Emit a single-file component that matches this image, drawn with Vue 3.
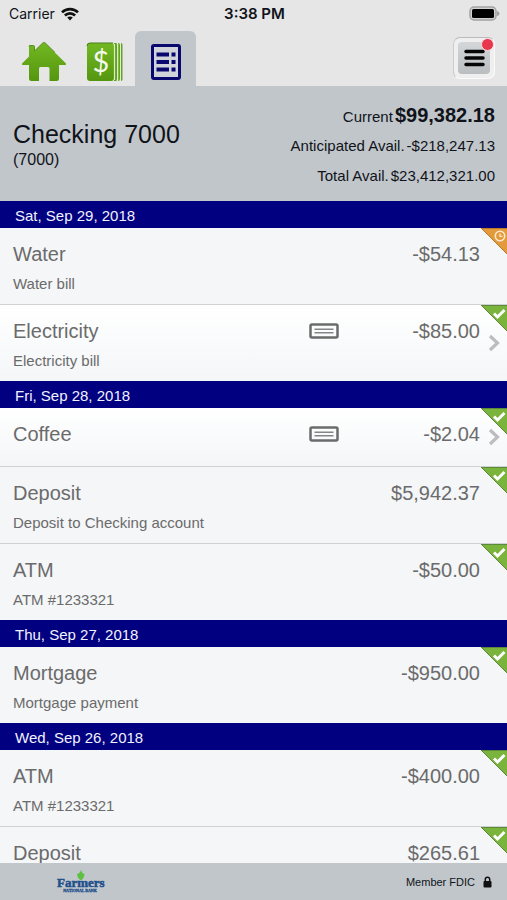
<script setup>
const groups = [
  {
    date: 'Sat, Sep 29, 2018',
    items: [
      { name: 'Water', note: 'Water bill', amount: '-$54.13', status: 'pending' },
      { name: 'Electricity', note: 'Electricity bill', amount: '-$85.00', status: 'cleared', check: true },
    ],
  },
  {
    date: 'Fri, Sep 28, 2018',
    items: [
      { name: 'Coffee', note: '', amount: '-$2.04', status: 'cleared', check: true },
      { name: 'Deposit', note: 'Deposit to Checking account', amount: '$5,942.37', status: 'cleared' },
      { name: 'ATM', note: 'ATM #1233321', amount: '-$50.00', status: 'cleared' },
    ],
  },
  {
    date: 'Thu, Sep 27, 2018',
    items: [{ name: 'Mortgage', note: 'Mortgage payment', amount: '-$950.00', status: 'cleared' }],
  },
  {
    date: 'Wed, Sep 26, 2018',
    items: [
      { name: 'ATM', note: 'ATM #1233321', amount: '-$400.00', status: 'cleared' },
      { name: 'Deposit', note: '', amount: '$265.61', status: 'cleared' },
    ],
  },
]
</script>

<template>
  <div class="app">
    <div class="status">
      <div class="carrier">
        <span>Carrier</span>
        <svg width="18" height="14" viewBox="0 0 18 14" fill="none" stroke="#111" stroke-width="2.6">
          <path d="M1 5.4C5.5 1 12.500 1 17 5.400" />
          <path d="M3.900 8.500C6.800 5.600 11.200 5.600 14.100 8.500" />
          <path d="M9 13.600L6.200 10.600C7.800 9.100 10.200 9.100 11.800 10.600Z" fill="#111" stroke="none" />
        </svg>
      </div>
      <div class="time">3:38 PM</div>
      <div class="battery">
        <svg width="31" height="15" viewBox="0 0 31 15">
          <rect x="1" y="1" width="26" height="13" rx="4" fill="#d2d2d2" stroke="#a3a3a3" stroke-width="1.500" />
          <rect x="3" y="3" width="22" height="9" rx="1.500" fill="#000" />
          <path d="M28 5Q30.500 5.500 30.500 7.500T28 10Z" fill="#a3a3a3" />
        </svg>
      </div>
    </div>

    <nav class="tabs">
      <a class="tab" href="#home" aria-label="Home">
        <svg width="46" height="40" viewBox="0 0 46 40">
          <defs>
            <linearGradient id="leaf" x1="0" y1="0" x2="0" y2="1">
              <stop offset="0" stop-color="#72b822" />
              <stop offset="1" stop-color="#55960f" />
            </linearGradient>
          </defs>
          <path d="M8 4.500Q8 3.500 9 3.500H12.500Q13.500 3.500 13.500 4.500V9L21.500 1.200Q23 0 24.500 1.200L45 21.500Q45.500 23 44 23H38V36.500Q38 39 35.500 39H28.500V26.500Q28.500 25 27 25H19.500Q18 25 18 26.500V39H10.500Q8 39 8 36.500V23H2Q.5 23 1 21.500L8 14.500Z" fill="url(#leaf)" />
          <path d="M8 4.500Q8 3.500 9 3.500H12.500Q13.500 3.500 13.500 4.500V9L21.500 1.200Q23 0 24.500 1.200L34 10.500" fill="none" stroke="#568f1b" />
        </svg>
      </a>
      <a class="tab" href="#accounts" aria-label="Accounts">
        <svg width="37" height="40" viewBox="0 0 37 40">
          <rect x="1" y="1" width="27" height="38" rx="3" fill="url(#leaf)" />
          <path d="M1 4Q1 1 4 1H27" fill="none" stroke="#477f16" />
          <path d="M28 1H30Q31 1 31 3V37Q31 39 30 39H28ZM32 1Q34 1 34 3V37Q34 39 32 39ZM35 1Q36.500 1 36.500 3V37Q36.500 39 35 39Z" fill="#60a61a" />
          <path d="M28.500 2V38M31.700 2V38" stroke="#dcebca" stroke-width="1.200" />
          <text x="15" y="30" text-anchor="middle" class="dollar">$</text>
        </svg>
      </a>
      <a class="tab active" href="#transactions" aria-label="Transactions" aria-current="page">
        <svg width="32" height="38" viewBox="0 0 32 38">
          <rect x="2.500" y="2.500" width="27" height="33" rx="1.500" fill="#d0d3da" stroke="#08086f" stroke-width="3" />
          <path d="M6.500 11.500H19M6.500 19H19M6.500 26.500H19M21.500 11.500H25.500M21.500 19H25.500M21.500 26.500H25.500" stroke="#08086f" stroke-width="4" />
        </svg>
      </a>
      <button class="menu" type="button" aria-label="Menu">
        <span class="menu-face">
          <svg width="21" height="18" viewBox="0 0 21 18" stroke="#050505" stroke-width="3.500" stroke-linecap="round">
            <path d="M2 2.500H19M2 9H19M2 15.500H19" />
          </svg>
        </span>
        <span class="dot"></span>
      </button>
    </nav>

    <header class="account">
      <div class="title">
        <h1>Checking 7000</h1>
        <p>(7000)</p>
      </div>
      <dl class="balances">
        <div class="line current"><dt>Current</dt><dd>$99,382.18</dd></div>
        <div class="line"><dt>Anticipated Avail.</dt><dd>-$218,247.13</dd></div>
        <div class="line"><dt>Total Avail.</dt><dd>$23,412,321.00</dd></div>
      </dl>
    </header>

    <main class="list">
      <section v-for="g in groups" :key="g.date" class="group">
        <h2>{{ g.date }}</h2>
        <component
          :is="t.check ? 'a' : 'div'"
          v-for="t in g.items"
          :key="t.name"
          :href="t.check ? '#check' : undefined"
          class="row"
          :class="{ tappable: t.check }"
        >
          <span class="name">{{ t.name }}</span>
          <span class="slip">
            <svg v-if="t.check" width="30" height="16" viewBox="0 0 30 16" fill="none">
              <rect x="1.500" y="1.500" width="27" height="13" rx="1.500" stroke="#6b6b6b" stroke-width="2.500" />
              <path d="M5.500 6.200H24.500M5.500 9.800H24.500" stroke="#858585" stroke-width="1.500" />
            </svg>
          </span>
          <span class="amount">{{ t.amount }}</span>
          <span v-if="t.note" class="note">{{ t.note }}</span>
          <svg class="corner" width="26" height="26" viewBox="0 0 26 26" fill="none">
            <template v-if="t.status === 'pending'">
              <path d="M0 0H26V26Z" fill="#e29a3a" />
              <path d="M0 .5H26M.5 .5L26 26" stroke="#b87a2c" />
              <circle cx="19" cy="8" r="4.700" stroke="#fbe9cf" stroke-width="1.600" />
              <path d="M19 5.500V8.300H21.500" stroke="#fbe9cf" stroke-width="1.300" />
            </template>
            <template v-else>
              <path d="M0 0H26V26Z" fill="#7ab43c" />
              <path d="M0 .5H26M.5 .5L26 26" stroke="#5c8a3a" />
              <path d="M13 8.500L16.500 12L23.500 5" stroke="#fff" stroke-width="3" />
            </template>
          </svg>
          <svg v-if="t.check" class="chevron" width="12" height="18" viewBox="0 0 12 18" fill="none">
            <path d="M2 2L9.500 9L2 16" stroke="#bdbdbf" stroke-width="3.200" />
          </svg>
        </component>
      </section>
    </main>

    <footer class="foot">
      <svg class="logo" width="54" height="26" viewBox="0 0 54 26" role="img" aria-label="Farmers National Bank">
        <text x="1" y="18" class="brand">Farmers</text>
        <path d="M25 1Q25.500 4 28.500 5Q28 9.500 25 11.500Q21.500 9.500 21 5Q24 4.500 25 1Z" fill="#5cc043" />
        <text x="24" y="23" text-anchor="middle" class="brand-sub">NATIONAL BANK</text>
      </svg>
      <div class="member">
        <span>Member FDIC</span>
        <svg width="9" height="12" viewBox="0 0 9 12">
          <path d="M2.300 6V3.500A2.200 2.200 0 0 1 6.700 3.500V6" fill="none" stroke="#111" stroke-width="1.500" />
          <rect x="0.500" y="5" width="8" height="6.500" rx="1" fill="#111" />
        </svg>
      </div>
    </footer>
  </div>
</template>

<style>
body {
  background: #e6e6e7;
}
</style>

<style scoped>
.app {
  display: flex;
  flex-direction: column;
  height: 100vh;
  overflow: hidden;
  background: #f4f6f8;
  font-family: "Liberation Sans", Arial, sans-serif;
  color: #10131a;
}
h1, h2, p, dl, dd {
  margin: 0;
  font-weight: 400;
}
.status {
  flex: none;
  display: grid;
  grid-template-columns: 1fr auto 1fr;
  align-items: center;
  height: 27px;
  padding: 0 7px 0 9px;
  background: #e6e6e7;
  font-family: Inter, sans-serif;
  font-size: 14px;
}
.carrier {
  display: flex;
  align-items: center;
  gap: 6px;
}
.time {
  font-weight: 600;
  font-size: 15px;
}
.battery {
  display: flex;
  justify-content: flex-end;
}
.tabs {
  flex: none;
  display: flex;
  align-items: flex-end;
  height: 59px;
  padding: 0 12px 0 13px;
  background: #e6e6e7;
}
.tab {
  display: flex;
  align-items: center;
  justify-content: center;
  width: 61px;
  height: 55px;
  padding-top: 6px;
  box-sizing: border-box;
}
.tab.active {
  background: #c1c6ca;
  border-radius: 6px 6px 0 0;
}
.dollar {
  font-family: Lato, sans-serif;
  font-size: 29px;
  fill: #f3f8ea;
}
.menu {
  position: relative;
  width: 42px;
  height: 42px;
  margin: 0 0 7px auto;
  padding: 4px;
  box-sizing: border-box;
  border: 1px solid #fafafa;
  border-top-color: #bbb;
  border-left-color: #ccc;
  border-radius: 7px;
  background: #efefef;
}
.menu-face {
  display: flex;
  align-items: center;
  justify-content: center;
  height: 100%;
  border-radius: 4px;
  background: linear-gradient(#d3d7d9, #babec1);
}
.dot {
  position: absolute;
  top: 0;
  right: 0;
  width: 11px;
  height: 11px;
  border: 1px solid #f8dfe2;
  border-radius: 50%;
  background: #e8374d;
}
.account {
  flex: none;
  display: flex;
  justify-content: space-between;
  padding: 14px 12px 10px 13px;
  background: #c1c6ca;
}
.title {
  padding-top: 20px;
}
h1 {
  font-size: 25px;
  line-height: 28px;
}
.title p {
  font-size: 16px;
  line-height: 24px;
}
.balances {
  font-size: 15px;
}
.line {
  display: flex;
  justify-content: flex-end;
  align-items: baseline;
  gap: 2px;
  line-height: 30px;
}
.current dd {
  font-size: 20px;
  font-weight: 700;
}
.current {
  height: 31px;
}
.list {
  flex: 1;
  min-height: 0;
  overflow: hidden;
}
h2 {
  height: 27px;
  padding-left: 15px;
  background: #000080;
  color: #f2f2ff;
  font-size: 15px;
  line-height: 29px;
}
.row {
  position: relative;
  display: grid;
  grid-template-columns: 1fr 30px 141px;
  align-content: start;
  min-height: 58px;
  padding: 12px 27px 10px 13px;
  box-sizing: border-box;
  background: #f4f6f8;
  color: #6b6b6b;
  text-decoration: none;
}
.row + .row {
  border-top: 1px solid #cfd1d3;
}
.tappable {
  background: linear-gradient(#fff, #f4f6f8);
}
.name, .amount {
  font-size: 20px;
  line-height: 28px;
}
.amount {
  text-align: right;
}
.slip {
  display: flex;
  align-items: center;
}
.note {
  grid-column: 1 / -1;
  margin-top: 6px;
  font-size: 15px;
  line-height: 20px;
}
.corner {
  position: absolute;
  top: 0;
  right: 0;
}
.chevron {
  position: absolute;
  top: calc(50% - 9px);
  right: 7px;
}
.foot {
  flex: none;
  display: flex;
  align-items: center;
  justify-content: space-between;
  height: 37px;
  padding: 0 15px 0 56px;
  background: #c1c6ca;
}
.brand {
  font-family: "Liberation Serif", serif;
  font-size: 13px;
  font-weight: 700;
  fill: #1d4f8b;
  stroke: #1d4f8b;
  stroke-width: 0.5px;
}
.brand-sub {
  font-family: "Liberation Serif", serif;
  font-size: 4px;
  font-weight: 700;
  fill: #1d4f8b;
  stroke: #1d4f8b;
  stroke-width: 0.3px;
}
.member {
  display: flex;
  align-items: center;
  gap: 8px;
  font-size: 11px;
}
</style>
